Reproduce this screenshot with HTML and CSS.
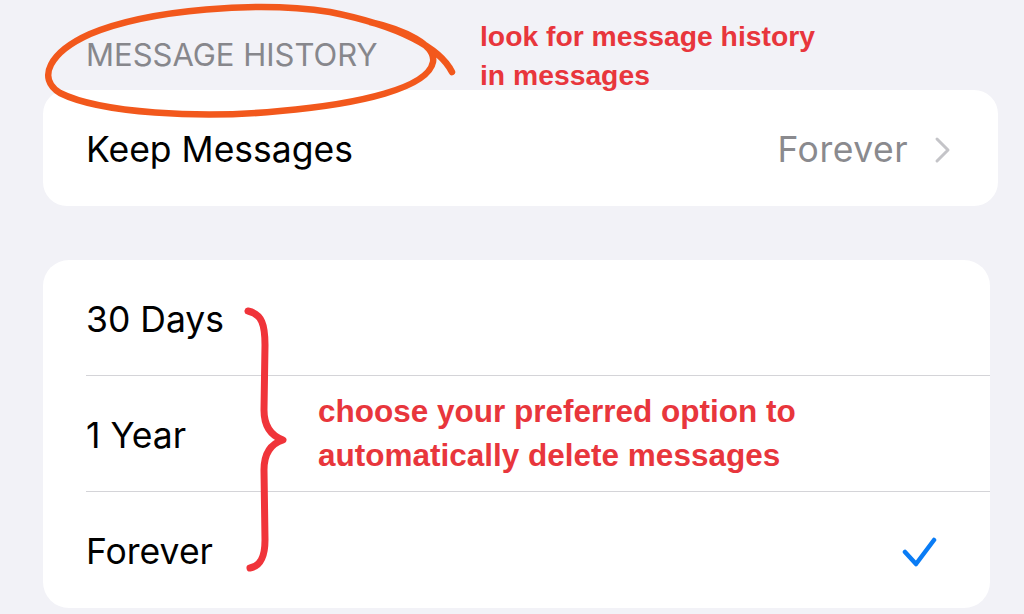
FILE: index.html
```html
<!DOCTYPE html>
<html>
<head>
<meta charset="utf-8">
<link rel="stylesheet" href="styles.css">
</head>
<body>
<div class="page">
  <div class="section-header">MESSAGE HISTORY</div>
  <div class="card card-top">
    <div class="row">
      <span class="label">Keep Messages</span>
      <span class="value">Forever
        <svg class="chevron" width="18" height="28" viewBox="0 0 18 28"><path d="M3 3 L14 14 L3 25" fill="none" stroke="#c4c4c8" stroke-width="3" stroke-linecap="round" stroke-linejoin="round"/></svg>
      </span>
    </div>
  </div>
  <div class="card card-options">
    <div class="row option"><span class="label">30 Days</span></div>
    <div class="row option"><span class="label">1 Year</span></div>
    <div class="row option last"><span class="label">Forever</span>
      <svg class="check" width="36" height="34" viewBox="0 0 36 34"><path d="M3 16 L14 28 L32 4" fill="none" stroke="#0a7cf5" stroke-width="4.5" stroke-linecap="round" stroke-linejoin="round"/></svg>
    </div>
  </div>

  <svg class="marks" width="1024" height="614" viewBox="0 0 1024 614">
    <path d="M452 72 C440 48, 400 26, 330 12 C260 1, 150 9, 90 34 C50 52, 36 78, 60 93 C100 113, 200 119, 280 111 C360 104, 428 88, 433 62 C436 45, 405 30, 370 22" fill="none" stroke="#f2581c" stroke-width="6.5" stroke-linecap="round"/>
    <path d="M248 311 C262 314, 265 325, 265 345 L264 410 C264 428, 272 436, 283 440 C270 444, 264 455, 264 470 L265 540 C265 558, 260 566, 250 568" fill="none" stroke="#f0343a" stroke-width="7" stroke-linecap="round" stroke-linejoin="round"/>
  </svg>
  <div class="note note-top">look for message history<br>in messages</div>
  <div class="note note-mid">choose your preferred option to<br>automatically delete messages</div>
</div>
</body>
</html>
```
FILE: styles.css
```css
html, body {
  margin: 0;
  padding: 0;
}
body {
  background: #f2f2f7;
  width: 1024px;
  height: 614px;
  overflow: hidden;
  font-family: Inter, "Liberation Sans", sans-serif;
}
.page {
  position: relative;
  width: 1024px;
  height: 614px;
  padding-top: 37px;
  box-sizing: border-box;
}
.section-header {
  margin-left: 86px;
  font-size: 31px;
  line-height: 36px;
  color: #87878c;
  height: 53px;
}
.card {
  background: #ffffff;
  margin-left: 43px;
}
.card-top {
  width: 955px;
  height: 116px;
  border-radius: 24px;
}
.card-options {
  width: 947px;
  margin-top: 54px;
  border-radius: 26px;
}
.row {
  display: flex;
  align-items: center;
  justify-content: space-between;
  height: 116px;
  padding-left: 43px;
  padding-top: 3px;
  box-sizing: border-box;
}
.card-top .row {
  padding-right: 46px;
}
.label {
  font-size: 35.5px;
  color: #000;
}
.value {
  display: flex;
  align-items: center;
  gap: 26px;
  font-size: 35.5px;
  letter-spacing: 0.5px;
  color: #8a8a8e;
}
.option {
  height: 116px;
  padding-right: 52px;
  position: relative;
}
.option::after {
  content: "";
  position: absolute;
  left: 43px;
  right: 0;
  bottom: 0;
  height: 1px;
  background: #d4d4d8;
}
.option.last::after {
  display: none;
}
.check {
  margin-top: 2px;
}
.marks {
  position: absolute;
  left: 0;
  top: 0;
  pointer-events: none;
}
.note {
  position: absolute;
  font-family: "Liberation Sans", Arial, sans-serif;
  font-weight: bold;
  color: #e8363c;
}
.note-top {
  left: 480px;
  top: 17px;
  font-size: 28.3px;
  line-height: 39px;
}
.note-mid {
  left: 318px;
  top: 389px;
  font-size: 31.5px;
  line-height: 44px;
}
```
